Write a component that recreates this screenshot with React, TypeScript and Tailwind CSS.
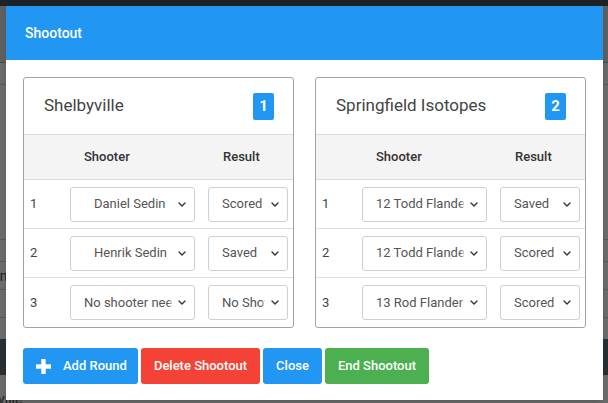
import React from 'react';

interface Round {
  num: number;
  shooter: string;
  result: string;
  indent?: boolean;
}

interface TeamCardProps {
  name: string;
  badge: string;
  rounds: Round[];
}

function Chevron() {
  return (
    <svg width="8" height="5" viewBox="0 0 8 5" className="shrink-0">
      <path d="M1 1L4 4L7 1" fill="none" stroke="#333" strokeWidth={1.4} strokeLinecap="round" strokeLinejoin="round" />
    </svg>
  );
}

function FakeSelect({ value, width, indent }: { value: string; width: string; indent?: boolean }) {
  return (
    <div className={`${width} h-[35px] border border-[#cfcfcf] rounded-[3px] flex items-center pl-[13px] pr-[8px] bg-white`}>
      <div className={`relative flex-1 min-w-0 overflow-hidden whitespace-nowrap text-[13px] text-[#555] ${indent ? 'pl-[10px]' : ''}`}>
        {value}
        <div className="absolute right-0 top-0 bottom-0 w-[4px] bg-gradient-to-r from-white/0 to-white/70" />
      </div>
      <div className="w-[14px] flex justify-end">
        <Chevron />
      </div>
    </div>
  );
}

function TeamCard({ name, badge, rounds }: TeamCardProps) {
  return (
    <div className="w-[271px] border border-[#a3a3a3] rounded-[3px] overflow-hidden">
      <div className="h-[56px] flex items-center justify-between pl-[20px] pr-[19px]">
        <span className="text-[17px] text-[#444]">{name}</span>
        <span className="w-[21px] h-[27px] bg-[#2196f3] rounded-[2px] text-white text-[15px] font-bold flex items-center justify-center">
          {badge}
        </span>
      </div>
      <div className="h-[46px] bg-[#f4f4f4] border-y border-[#dcdcdc] flex items-center text-[13px] font-medium text-[#333]">
        <span className="ml-[60px] w-[139px]">Shooter</span>
        <span>Result</span>
      </div>
      {rounds.map((r, i) => (
        <div
          key={r.num}
          className={`h-[49px] flex items-center ${i < rounds.length - 1 ? 'border-b border-[#dedede]' : ''}`}
        >
          <span className="w-[46px] pl-[6px] text-[13px] text-[#444]">{r.num}</span>
          <FakeSelect value={r.shooter} width="w-[125px]" indent={r.indent} />
          <div className="w-[13px]" />
          <FakeSelect value={r.result} width="w-[80px]" />
        </div>
      ))}
    </div>
  );
}

export default function App() {
  const home: Round[] = [
    { num: 1, shooter: 'Daniel Sedin', result: 'Scored', indent: true },
    { num: 2, shooter: 'Henrik Sedin', result: 'Saved', indent: true },
    { num: 3, shooter: 'No shooter needed', result: 'No Shot' },
  ];
  const away: Round[] = [
    { num: 1, shooter: '12 Todd Flanders', result: 'Saved' },
    { num: 2, shooter: '12 Todd Flanders', result: 'Scored' },
    { num: 3, shooter: '13 Rod Flanders', result: 'Scored' },
  ];

  return (
    <div className="relative w-[608px] h-[403px] overflow-hidden bg-[#6b6b6b]" style={{ fontFamily: 'Roboto, "Noto Sans", sans-serif' }}>
      {/* page behind the backdrop */}
      <div className="flex flex-col">
        <div className="h-[6px] bg-[#1d2226]" />
        <div className="h-[57px] bg-[#5f5f5f] border-b border-[#4c4c4c]" />
        <div className="h-[22px] bg-[#6a6a6a] border-b border-[#555]" />
        <div className="h-[155px] bg-[#6b6b6b] border-b border-[#595959]" />
        <div className="h-[22px] border-b border-[#5a5a5a]" />
        <div className="h-[28px] border-b border-[#5a5a5a] text-[14px] text-[#222] leading-[28px] -ml-[23px] whitespace-nowrap">
          Team
        </div>
        <div className="h-[28px] border-b border-[#5a5a5a]" />
        <div className="h-[21px]" />
        <div className="h-[36px] bg-[#283034]" />
        <div className="h-[16px]" />
        <div className="text-[14px] text-[#222] -ml-[2px] leading-[16px]">ville</div>
      </div>

      {/* modal */}
      <div className="absolute top-[6px] left-[6px] w-[597px] h-[394px] bg-white shadow-md flex flex-col">
        <div className="h-[54px] bg-[#2196f3] flex items-center pl-[19px]">
          <span className="text-white text-[14px] font-medium">Shootout</span>
        </div>
        <div className="pl-[17px] pt-[17px]">
          <div className="flex gap-[21px]">
            <TeamCard name="Shelbyville" badge="1" rounds={home} />
            <TeamCard name="Springfield Isotopes" badge="2" rounds={away} />
          </div>
          <div className="flex gap-[3px] mt-[20px]">
            <button className="h-[36px] w-[115px] bg-[#2196f3] text-white text-[13px] font-medium rounded-[3px] flex items-center pl-[13px]">
              <svg width="15" height="15" viewBox="0 0 15 15" className="mr-[12px]">
                <rect x="5.3" y="0" width="4.4" height="15" fill="white" />
                <rect x="0" y="5.3" width="15" height="4.4" fill="white" />
              </svg>
              Add Round
            </button>
            <button className="h-[36px] w-[119px] bg-[#f44336] text-white text-[13px] font-medium rounded-[3px]">
              Delete Shootout
            </button>
            <button className="h-[36px] w-[59px] bg-[#2196f3] text-white text-[13px] font-medium rounded-[3px]">
              Close
            </button>
            <button className="h-[36px] w-[104px] bg-[#4caf50] text-white text-[13px] font-medium rounded-[3px]">
              End Shootout
            </button>
          </div>
        </div>
      </div>
    </div>
  );
}
